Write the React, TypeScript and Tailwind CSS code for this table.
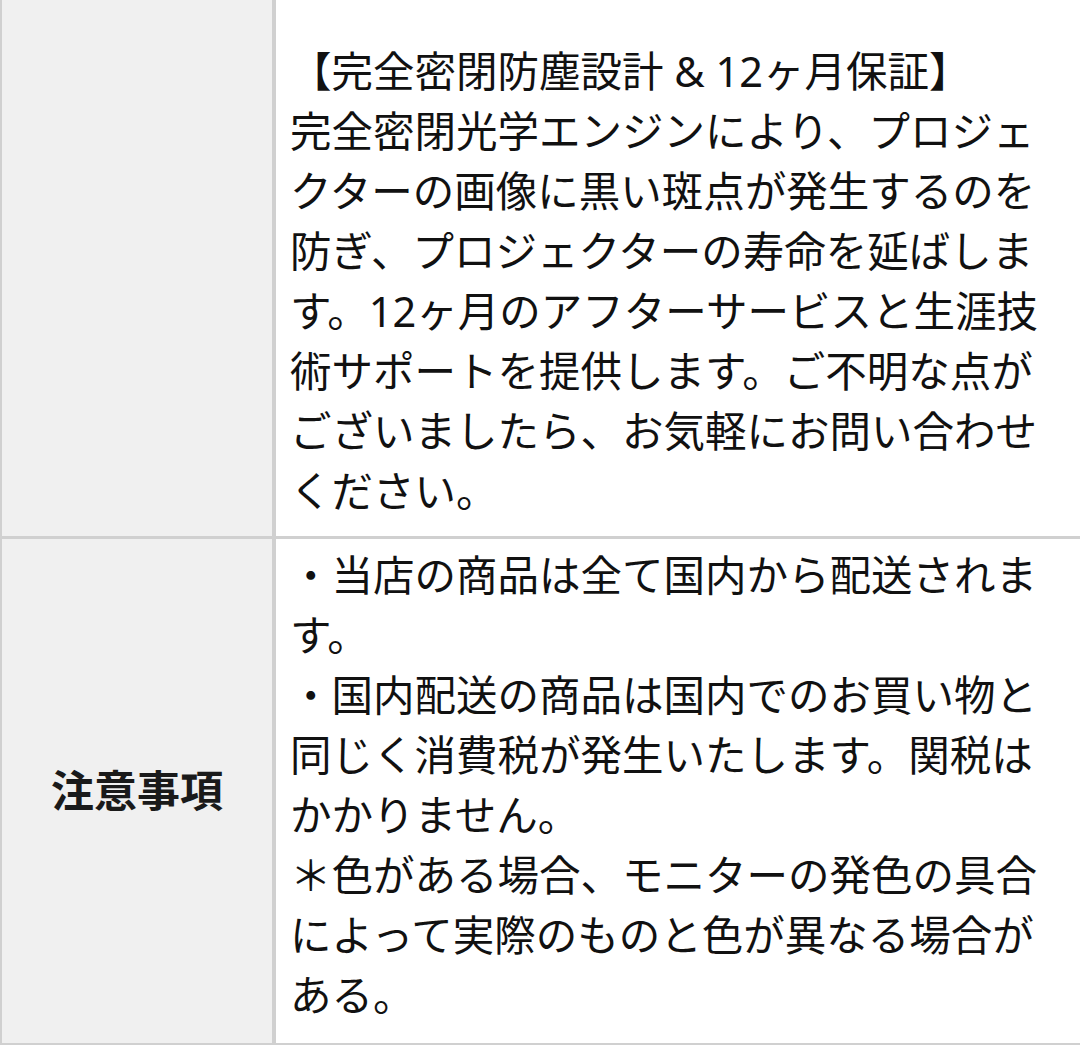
const rows = {
  spec: [
    '【完全密閉防塵設計 & 12ヶ月保証】',
    '完全密閉光学エンジンにより、プロジェクターの画像に黒い斑点が発生するのを防ぎ、プロジェクターの寿命を延ばします。12ヶ月のアフターサービスと生涯技術サポートを提供します。ご不明な点がございましたら、お気軽にお問い合わせください。',
  ],
  notes: [
    '・当店の商品は全て国内から配送されます。',
    '・国内配送の商品は国内でのお買い物と同じく消費税が発生いたします。関税はかかりません。',
    '＊色がある場合、モニターの発色の具合によって実際のものと色が異なる場合がある。',
  ],
}

export default function App() {
  return (
    <div
      className="w-[1080px] h-[1045px] overflow-hidden bg-white border-l-2 border-[#d0d0d0] text-[#111]"
      style={{ fontFamily: '"Noto Sans", "Noto Sans CJK JP", sans-serif' }}
    >
      {/* spec row, label cell is empty */}
      <div className="flex border-b-[3px] border-[#d0d0d0]">
        <div className="w-[274px] shrink-0 bg-[#f0f0f0] border-r-4 border-[#d0d0d0]" />
        <div className="flex-1 pl-[14px] pr-[18px] pt-[41px] pb-[15px] text-[41.5px] leading-[60px]">
          {rows.spec.map((line, i) => (
            <p key={i}>{line}</p>
          ))}
        </div>
      </div>

      {/* notes row */}
      <div className="flex border-b-[3px] border-[#d0d0d0]">
        <div className="w-[274px] shrink-0 bg-[#f0f0f0] border-r-4 border-[#d0d0d0] flex items-center justify-center">
          <span className="text-[43px] font-bold text-[#1a1a1a]">注意事項</span>
        </div>
        <div className="flex-1 pl-[14px] pr-[18px] pt-[6px] pb-[18px] text-[41.5px] leading-[60px]">
          {rows.notes.map((line, i) => (
            <p key={i}>{line}</p>
          ))}
        </div>
      </div>
    </div>
  )
}
